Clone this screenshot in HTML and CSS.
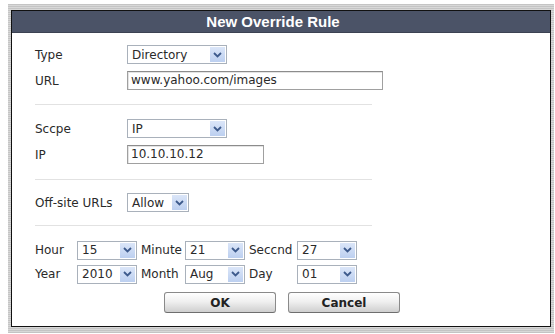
FILE: index.html
```html
<!DOCTYPE html>
<html lang="en">
<head>
    <meta charset="UTF-8">
    <title>New Override Rule</title>
    <link rel="stylesheet" href="styles.css">
</head>
<body>
    <div class="frame">
        <div class="dialog">
            <div class="title">New Override Rule</div>
            <div class="content">
                <div class="row">
                    <span class="label">Type</span>
                    <div class="select w100"><span class="val">Directory</span><span class="arrow"><svg width="9" height="6" viewBox="0 0 9 6"><path d="M1 1 L4.5 4.5 L8 1" fill="none" stroke="#3d5a8c" stroke-width="1.8"/></svg></span></div>
                </div>
                <div class="row">
                    <span class="label">URL</span>
                    <div class="input w255">www.yahoo.com/images</div>
                </div>
                <div class="sep"></div>
                <div class="row">
                    <span class="label">Sccpe</span>
                    <div class="select w100"><span class="val">IP</span><span class="arrow"><svg width="9" height="6" viewBox="0 0 9 6"><path d="M1 1 L4.5 4.5 L8 1" fill="none" stroke="#3d5a8c" stroke-width="1.8"/></svg></span></div>
                </div>
                <div class="row">
                    <span class="label">IP</span>
                    <div class="input w136">10.10.10.12</div>
                </div>
                <div class="sep sep-b"></div>
                <div class="row">
                    <span class="label">Off-site URLs</span>
                    <div class="select w62"><span class="val">Allow</span><span class="arrow"><svg width="9" height="6" viewBox="0 0 9 6"><path d="M1 1 L4.5 4.5 L8 1" fill="none" stroke="#3d5a8c" stroke-width="1.8"/></svg></span></div>
                </div>
                <div class="sep sep-c"></div>
                <div class="row time">
                    <span class="tlabel">Hour</span>
                    <div class="select w60"><span class="val">15</span><span class="arrow"><svg width="9" height="6" viewBox="0 0 9 6"><path d="M1 1 L4.5 4.5 L8 1" fill="none" stroke="#3d5a8c" stroke-width="1.8"/></svg></span></div>
                    <span class="tlabel mid">Minute</span>
                    <div class="select w60"><span class="val">21</span><span class="arrow"><svg width="9" height="6" viewBox="0 0 9 6"><path d="M1 1 L4.5 4.5 L8 1" fill="none" stroke="#3d5a8c" stroke-width="1.8"/></svg></span></div>
                    <span class="tlabel mid2">Seccnd</span>
                    <div class="select w60"><span class="val">27</span><span class="arrow"><svg width="9" height="6" viewBox="0 0 9 6"><path d="M1 1 L4.5 4.5 L8 1" fill="none" stroke="#3d5a8c" stroke-width="1.8"/></svg></span></div>
                </div>
                <div class="row time">
                    <span class="tlabel">Year</span>
                    <div class="select w60"><span class="val">2010</span><span class="arrow"><svg width="9" height="6" viewBox="0 0 9 6"><path d="M1 1 L4.5 4.5 L8 1" fill="none" stroke="#3d5a8c" stroke-width="1.8"/></svg></span></div>
                    <span class="tlabel mid">Month</span>
                    <div class="select w60"><span class="val">Aug</span><span class="arrow"><svg width="9" height="6" viewBox="0 0 9 6"><path d="M1 1 L4.5 4.5 L8 1" fill="none" stroke="#3d5a8c" stroke-width="1.8"/></svg></span></div>
                    <span class="tlabel mid2">Day</span>
                    <div class="select w60"><span class="val">01</span><span class="arrow"><svg width="9" height="6" viewBox="0 0 9 6"><path d="M1 1 L4.5 4.5 L8 1" fill="none" stroke="#3d5a8c" stroke-width="1.8"/></svg></span></div>
                </div>
                <div class="buttons">
                    <button class="btn">OK</button>
                    <button class="btn">Cancel</button>
                </div>
            </div>
        </div>
    </div>
</body>
</html>
```

FILE: styles.css
```css
body {
    margin: 0;
    background: #ffffff;
    font-family: "DejaVu Sans", Verdana, sans-serif;
    font-size: 12px;
    color: #2a2a2a;
}
.frame {
    margin: 4px 0 0 8px;
    width: 540px;
    padding: 6px 3px 6px 3px;
    background: repeating-linear-gradient(to bottom, #c4c4c4 0, #c4c4c4 1px, #d8d8d8 1px, #d8d8d8 2px);
}
.dialog {
    border: 1px solid #111;
    background: #ffffff;
}
.title {
    height: 21px;
    line-height: 21px;
    padding-right: 16px;
    background: #4b5367;
    color: #ffffff;
    font-family: "Liberation Sans", Arial, sans-serif;
    font-weight: bold;
    font-size: 15px;
    text-align: center;
    border-bottom: 1px solid #3c4252;
}
.content {
    display: flex;
    flex-direction: column;
    align-items: flex-start;
    padding: 12px 0 13px 23px;
}
.row {
    display: flex;
    align-items: center;
    height: 19px;
    margin-bottom: 7px;
}
.label {
    width: 92px;
}
.select {
    display: flex;
    align-items: center;
    height: 17px;
    border: 1px solid #a9b1bb;
    background: #fff;
}
.select .val {
    flex: 1;
    padding-left: 4px;
}
.select .arrow {
    width: 15px;
    height: 15px;
    margin-right: 1px;
    background: linear-gradient(to bottom, #dbe6f8, #bccff0);
    display: flex;
    align-items: center;
    justify-content: center;
}
.input {
    height: 17px;
    line-height: 17px;
    border: 1px solid #a0a0a0;
    border-top-color: #8c8c8c;
    padding-left: 3px;
    box-shadow: inset 1px 1px 0 #e4e4e4;
    background: #fff;
}
.w100 { width: 98px; }
.w62 { width: 60px; }
.w60 { width: 58px; }
.w255 { width: 251px; }
.w136 { width: 132px; }
.sep {
    width: 337px;
    height: 1px;
    background: #e2e2e2;
    margin: 7px 0 14px 0;
}
.sep-b { margin: 8px 0 13px 0; }
.sep-c { margin: 6px 0 15px 0; }
.time {
    height: 18px;
    margin-bottom: 6px;
}
.tlabel {
    width: 42px;
}
.tlabel.mid {
    width: 44px;
    padding-left: 4px;
}
.tlabel.mid2 {
    width: 48px;
    padding-left: 4px;
}
.buttons {
    display: flex;
    gap: 12px;
    padding-left: 129px;
    margin-top: 3px;
}
.btn {
    width: 112px;
    height: 21px;
    border: 1px solid #8a8a8a;
    border-bottom-color: #6e6e6e;
    border-radius: 3px;
    background: linear-gradient(to bottom, #ffffff 0%, #f0f0f0 45%, #cfcfcf 100%);
    font-family: "DejaVu Sans", Verdana, sans-serif;
    font-size: 12px;
    font-weight: bold;
    color: #222;
    padding: 0;
}
```
